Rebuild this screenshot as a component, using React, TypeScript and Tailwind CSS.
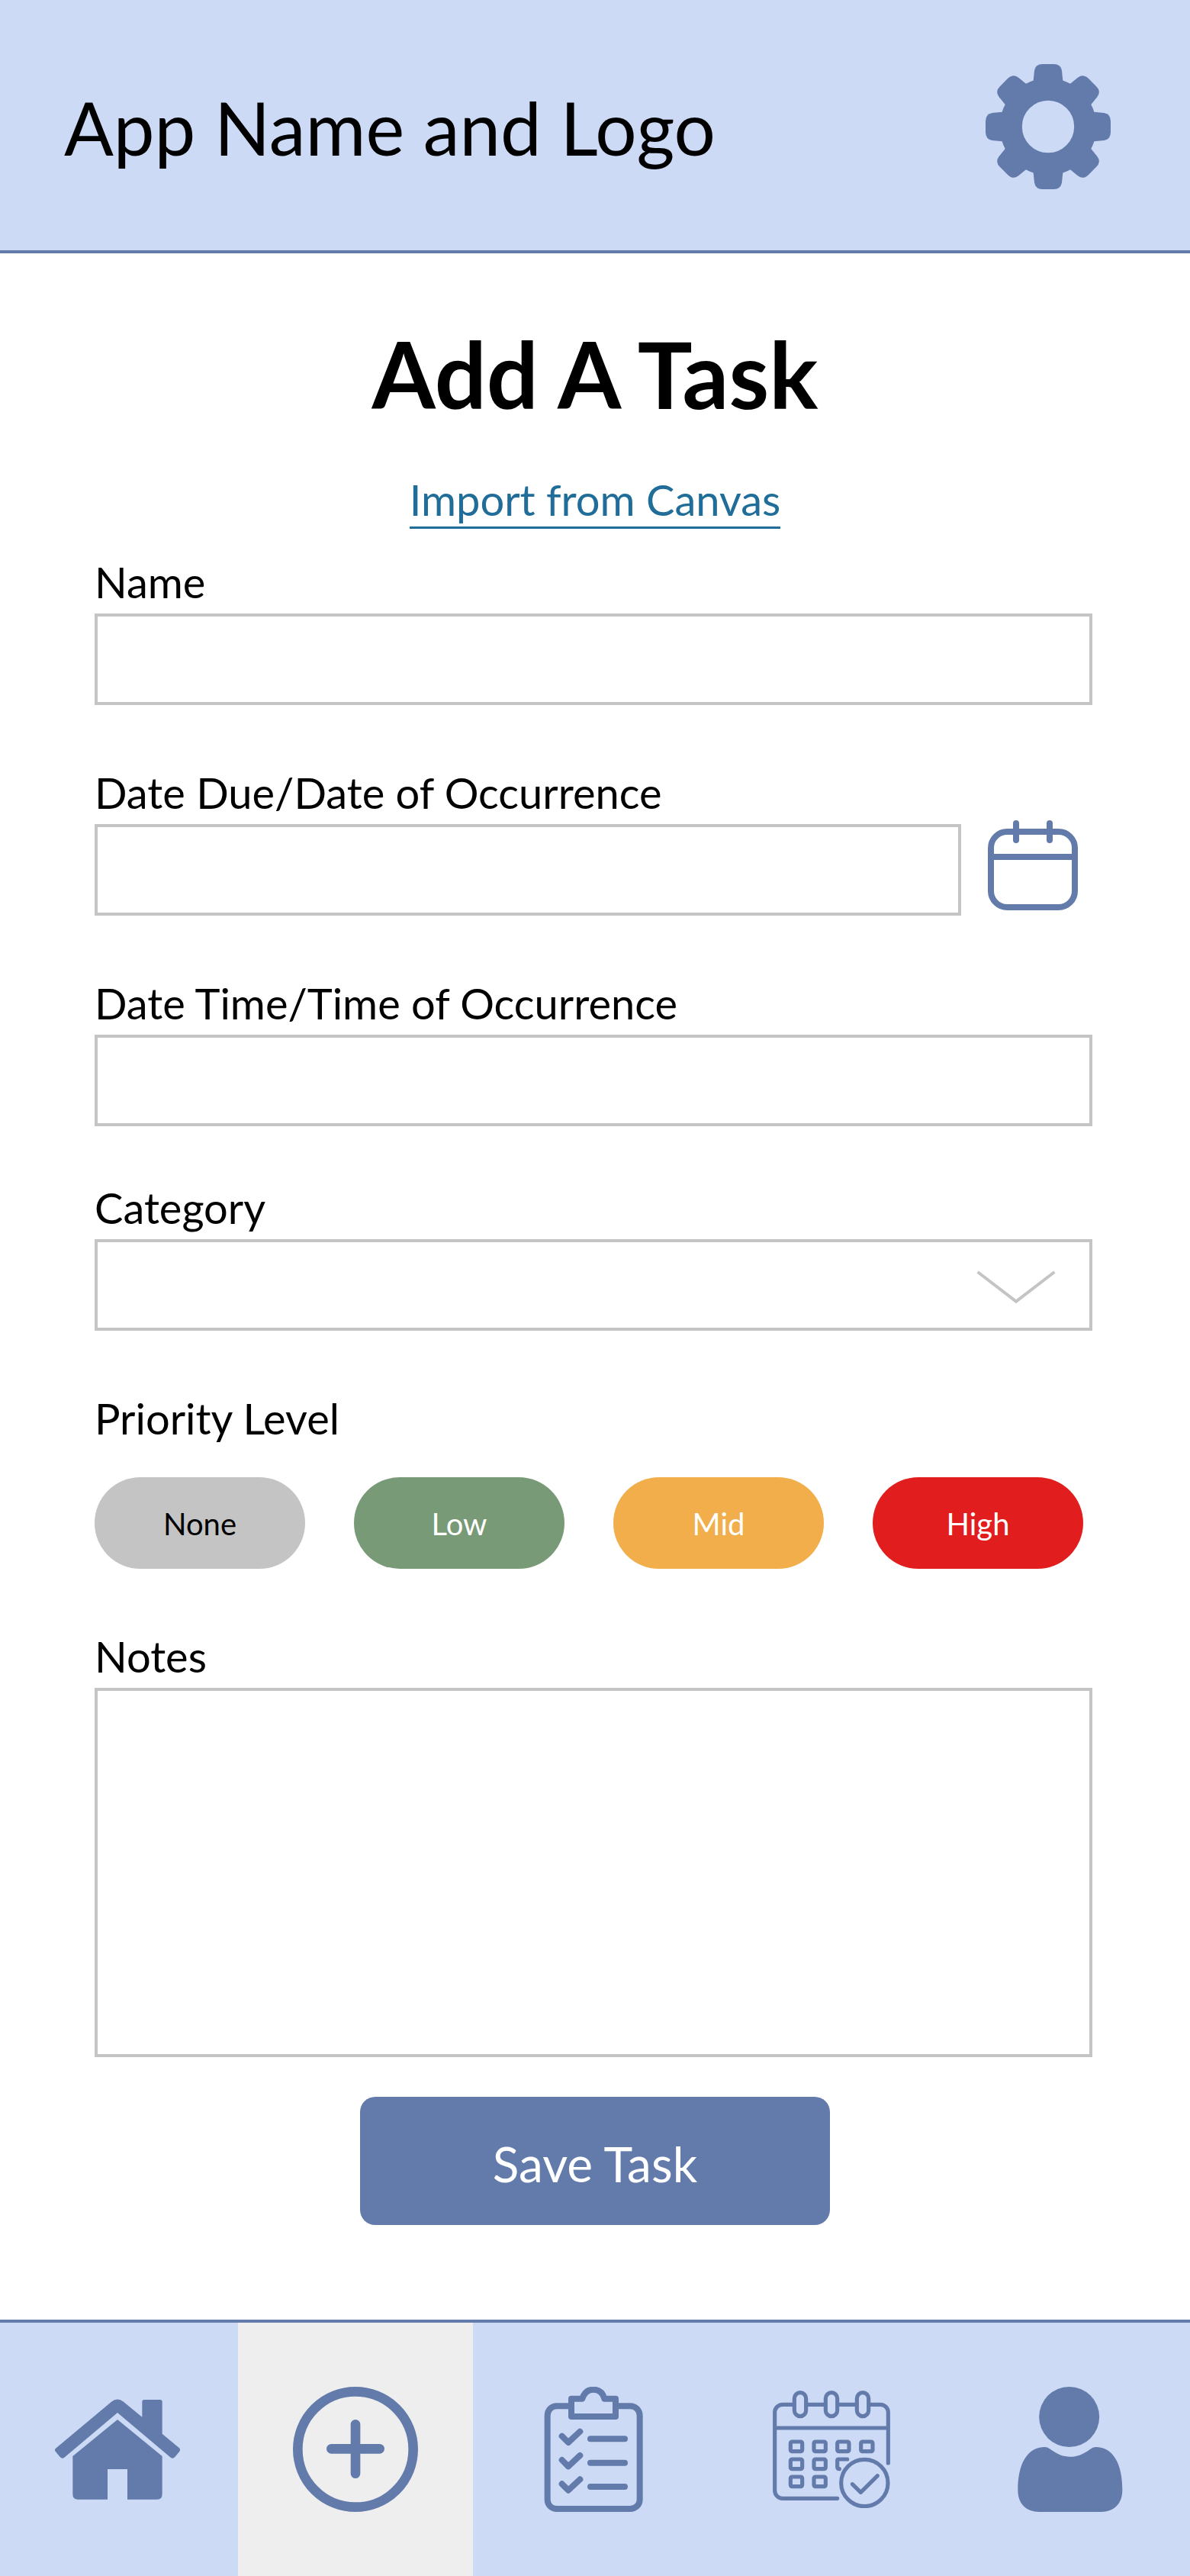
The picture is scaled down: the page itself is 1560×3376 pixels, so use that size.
import type { ReactNode } from "react";

const BLUE = "#637bab";

function GearIcon() {
  return (
    <svg width="164" height="164" viewBox="96 72 492 492" aria-hidden="true">
      <circle cx="342" cy="318" r="146" fill="none" stroke={BLUE} strokeWidth="87" />
      {[0, 45, 90, 135, 180, 225, 270, 315].map((angle) => (
        <path
          key={angle}
          transform={`rotate(${angle} 342 318)`}
          fill={BLUE}
          d="M284 137L288 98Q292 72 320 72H364Q392 72 396 98L400 137L385 170H299Z"
        />
      ))}
    </svg>
  );
}

function CalendarIcon() {
  return (
    <svg
      width="118"
      height="130"
      viewBox="165 75 354 390"
      fill="none"
      stroke={BLUE}
      strokeWidth="24"
      strokeLinecap="round"
      className="shrink-0"
      aria-hidden="true"
    >
      <rect x="177" y="120" width="330" height="297" rx="64" />
      <path d="M180 219H504M276 87V153M408 87V153" />
    </svg>
  );
}

function ChevronIcon() {
  return (
    <svg width="104" height="48" viewBox="120 180 312 144" aria-hidden="true">
      <path d="M125 201L276 317L427 201" fill="none" stroke="#c4c4c4" strokeWidth="12" />
    </svg>
  );
}

function HomeIcon() {
  return (
    <svg width="168" height="132" viewBox="96 342 504 396" fill={BLUE} aria-hidden="true">
      <path d="M99 536L318 353Q342 334 366 353L439 413V353Q439 345 447 345H510Q518 345 518 353V479L585 535Q591 541 586 548L568 570Q560 579 552 573L342 396L132 573Q124 579 116 570L98 548Q93 542 99 536Z" />
      <path d="M342 423L518 567V716Q518 737 498 737H381V618H303V737H186Q166 737 166 716V567Z" />
    </svg>
  );
}

function PlusIcon() {
  return (
    <svg
      width="164"
      height="164"
      viewBox="252 294 492 492"
      fill="none"
      stroke={BLUE}
      strokeWidth="38"
      strokeLinecap="round"
      aria-hidden="true"
    >
      <circle cx="498" cy="540" r="227" />
      <path d="M498 442V635M403 538H593" />
    </svg>
  );
}

function ClipboardIcon() {
  return (
    <svg
      width="130"
      height="164"
      viewBox="69 84 390 492"
      fill="none"
      stroke={BLUE}
      strokeWidth="24"
      strokeLinecap="round"
      strokeLinejoin="round"
      aria-hidden="true"
    >
      <path strokeLinecap="butt" d="M177 160H120C98 160 83 176 83 197V527C83 548 98 564 120 564H408C430 564 446 548 446 527V197C446 176 430 160 408 160H351" />
      <path d="M177 131H220C228 105 243 95 264 95C285 95 300 105 307 131H351V201H177Z" />
      {[0, 94, 188].map((dy) => (
        <path key={dy} transform={`translate(0 ${dy})`} d="M140 278L165 303L211 260M252 289H387" />
      ))}
    </svg>
  );
}

const DAY_CELLS = [
  [139, 269],
  [231, 269],
  [323, 269],
  [416, 269],
  [139, 338],
  [231, 338],
  [139, 407],
  [231, 407],
];

function ScheduleIcon() {
  return (
    <svg
      width="154"
      height="154"
      viewBox="69 68 462 462"
      fill="none"
      stroke={BLUE}
      strokeWidth="15.5"
      strokeLinecap="round"
      strokeLinejoin="round"
      aria-hidden="true"
    >
      <path d="M154 123H108C90 123 77 137 77 154V460C77 478 90 492 108 492H323M208 123H270M330 123H392M453 123H492C510 123 523 137 523 154V353M77 215H523" />
      {[154, 277, 400].map((x) => (
        <rect key={x} x={x} y="76" width="46" height="93" rx="23" />
      ))}
      {DAY_CELLS.map(([x, y]) => (
        <rect key={`${x}-${y}`} x={x} y={y} width="46" height="38" rx="6" />
      ))}
      <path d="M362 338H328Q323 338 323 343V368Q323 376 331 376" />
      <circle cx="430" cy="431" r="92" />
      <path d="M382 436L415 468L481 403" />
    </svg>
  );
}

function PersonIcon() {
  return (
    <svg width="138" height="164" viewBox="69 84 414 492" fill={BLUE} className="overflow-visible" aria-hidden="true">
      <circle cx="275" cy="202.5" r="118.5" />
      <path d="M180 321Q189 321 198 328C233 352 250 359 278 359C306 359 325 352 358 329Q368 321 378 321C450 321 484 390 484 490C484 545 450 576 400 576H157C107 576 73 545 73 490C73 390 108 321 180 321Z" />
    </svg>
  );
}

function Field({ label, className = "", children }: { label: string; className?: string; children: ReactNode }) {
  return (
    <label className={`flex flex-col gap-[7px] ${className}`}>
      <span className="text-[56px] leading-[69px]">{label}</span>
      {children}
    </label>
  );
}

const INPUT = "block h-[120px] w-full min-w-0 border-4 border-[#c4c4c4] bg-white px-6 text-[56px] outline-none";

const PRIORITIES = [
  { label: "None", style: "bg-[#c4c4c4] text-black" },
  { label: "Low", style: "bg-[#789a76] text-white" },
  { label: "Mid", style: "bg-[#f1ae4a] text-white" },
  { label: "High", style: "bg-[#e11d1d] text-white" },
];

const TABS = [
  { label: "Home", width: "w-[312px]", icon: <HomeIcon /> },
  { label: "Add task", width: "w-[308px] bg-[#eeeeee]", icon: <PlusIcon /> },
  { label: "Tasks", width: "w-[316px]", icon: <ClipboardIcon /> },
  { label: "Schedule", width: "w-[308px]", icon: <ScheduleIcon /> },
  { label: "Profile", width: "w-[316px]", icon: <PersonIcon /> },
];

export default function App() {
  return (
    <div className="flex h-[3376px] w-[1560px] flex-col bg-white font-['Lato',sans-serif] text-black">
      <header className="flex h-[332px] shrink-0 items-start justify-between border-b-4 border-[#637bab] bg-[#ccdaf5] pt-[84px] pr-[104px] pl-[84px]">
        <div className="pt-[25px] text-[96px] leading-[116px]">App Name and Logo</div>
        <button aria-label="Settings">
          <GearIcon />
        </button>
      </header>

      <main className="flex grow flex-col pt-[86px] pr-[128px] pl-[124px]">
        <div className="-mr-1 flex flex-col items-center">
          <h1 className="text-[120px] leading-[144px] font-bold">Add A Task</h1>
          <a href="#" className="mt-[58px] h-[73px] border-b-3 border-[#1f6d98] text-[56px] leading-[69px] text-[#1f6d98]">
            Import from Canvas
          </a>
        </div>

        <Field label="Name" className="mt-[35px]">
          <input className={INPUT} />
        </Field>

        <Field label="Date Due/Date of Occurrence" className="mt-20">
          <div className="flex h-[120px] items-center gap-[35px] pr-[19px]">
            <input className={INPUT} />
            <CalendarIcon />
          </div>
        </Field>

        <Field label="Date Time/Time of Occurrence" className="mt-20">
          <input className={INPUT} />
        </Field>

        <Field label="Category" className="mt-[72px]">
          <button className="flex h-[120px] items-center justify-end border-4 border-[#c4c4c4] bg-white pr-11">
            <ChevronIcon />
          </button>
        </Field>

        <div className="mt-20 text-[56px] leading-[69px]">Priority Level</div>
        <div className="mt-[43px] flex gap-16">
          {PRIORITIES.map(({ label, style }) => (
            <button key={label} className={`h-[120px] w-[276px] rounded-full pt-0.5 text-[40px] leading-[48px] ${style}`}>
              {label}
            </button>
          ))}
        </div>

        <Field label="Notes" className="mt-20">
          <textarea className="block h-[484px] resize-none border-4 border-[#c4c4c4] bg-white p-6 text-[56px] outline-none" />
        </Field>

        <div className="mt-[52px] -mr-1 flex justify-center">
          <button className="h-[168px] w-[616px] rounded-[20px] bg-[#637bab] pt-[7px] text-[64px] leading-[77px] text-white">
            Save Task
          </button>
        </div>
      </main>

      <nav className="flex h-[336px] shrink-0 border-t-4 border-[#637bab] bg-[#ccdaf5]">
        {TABS.map(({ label, width, icon }) => (
          <button key={label} aria-label={label} className={`flex items-center justify-center ${width}`}>
            {icon}
          </button>
        ))}
      </nav>
    </div>
  );
}
